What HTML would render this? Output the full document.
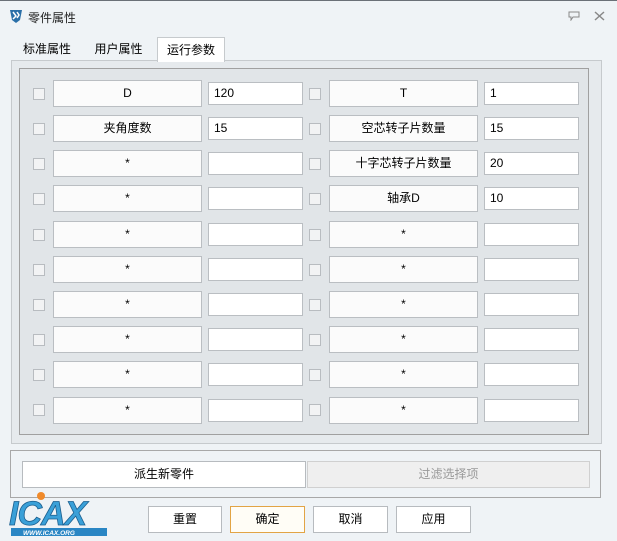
<!DOCTYPE html>
<html><head><meta charset="utf-8"><style>
*{box-sizing:border-box;margin:0;padding:0}
body{width:617px;height:541px;background:#eff3f6;font-family:"Liberation Sans","Noto Sans CJK SC",sans-serif;font-size:12px;color:#000;position:relative;overflow:hidden}
.a{position:absolute}
.top{left:0;top:0;width:617px;height:1px;background:#6a7077}
.title{left:28px;top:9px;font-size:12px;color:#222}
.tab{top:37px;height:24px;line-height:24px;text-align:center;font-size:12px}
.outer{left:11px;top:60px;width:591px;height:384px;border:1px solid #c6cacd;background:#e6eaed}
.inner{left:19px;top:68px;width:570px;height:367px;border:1px solid #a0a0a0;background:#e1e5e8}
.cb{width:12px;height:12px;border:1px solid #b8bcc0;background:#f2f3f4}
.lbl{width:149px;height:27px;border:1px solid #babec2;background:#fbfbfb;text-align:center;line-height:25px}
.val{width:95px;height:23px;border:1px solid #babec2;background:#fff;line-height:21px;padding-left:5px}
.btn{height:27px;border:1px solid #b7bbbf;background:#fff;text-align:center;line-height:25px}
</style></head><body>
<div class="a top"></div>
<svg class="a" style="left:8px;top:8px" width="16" height="16" viewBox="0 0 16 16"><path d="M2 2h12l-2 10-4 3-4-3z" fill="#2a6fa8"/><path d="M5 4l3 4-3 3M9 4l2 3-2 3" stroke="#fff" stroke-width="1.5" fill="none"/></svg>
<div class="a title">零件属性</div>
<svg class="a" style="left:568px;top:11px" width="12" height="10"><path d="M1 1h10v5H5l-2 3V6H1z" fill="none" stroke="#888"/></svg>
<svg class="a" style="left:594px;top:11px" width="11" height="10"><path d="M1 1l9 8M10 1l-9 8" stroke="#888" stroke-width="1.5"/></svg>
<div class="a tab" style="left:14px;width:66px">标准属性</div>
<div class="a tab" style="left:85px;width:67px">用户属性</div>
<div class="a outer"></div>
<div class="a tab" style="left:157px;width:68px;background:#fff;border:1px solid #c6cacd;border-bottom:none;height:25px">运行参数</div>
<div class="a inner"></div>
<!--ROWS-->
<div class="a cb" style="left:33px;top:88px"></div><div class="a lbl" style="left:53px;top:80px">D</div><div class="a val" style="left:208px;top:82px">120</div>
<div class="a cb" style="left:309px;top:88px"></div><div class="a lbl" style="left:329px;top:80px">T</div><div class="a val" style="left:484px;top:82px">1</div>
<div class="a cb" style="left:33px;top:123px"></div><div class="a lbl" style="left:53px;top:115px">夹角度数</div><div class="a val" style="left:208px;top:117px">15</div>
<div class="a cb" style="left:309px;top:123px"></div><div class="a lbl" style="left:329px;top:115px">空芯转子片数量</div><div class="a val" style="left:484px;top:117px">15</div>
<div class="a cb" style="left:33px;top:158px"></div><div class="a lbl" style="left:53px;top:150px">*</div><div class="a val" style="left:208px;top:152px"></div>
<div class="a cb" style="left:309px;top:158px"></div><div class="a lbl" style="left:329px;top:150px">十字芯转子片数量</div><div class="a val" style="left:484px;top:152px">20</div>
<div class="a cb" style="left:33px;top:193px"></div><div class="a lbl" style="left:53px;top:185px">*</div><div class="a val" style="left:208px;top:187px"></div>
<div class="a cb" style="left:309px;top:193px"></div><div class="a lbl" style="left:329px;top:185px">轴承D</div><div class="a val" style="left:484px;top:187px">10</div>
<div class="a cb" style="left:33px;top:229px"></div><div class="a lbl" style="left:53px;top:221px">*</div><div class="a val" style="left:208px;top:223px"></div>
<div class="a cb" style="left:309px;top:229px"></div><div class="a lbl" style="left:329px;top:221px">*</div><div class="a val" style="left:484px;top:223px"></div>
<div class="a cb" style="left:33px;top:264px"></div><div class="a lbl" style="left:53px;top:256px">*</div><div class="a val" style="left:208px;top:258px"></div>
<div class="a cb" style="left:309px;top:264px"></div><div class="a lbl" style="left:329px;top:256px">*</div><div class="a val" style="left:484px;top:258px"></div>
<div class="a cb" style="left:33px;top:299px"></div><div class="a lbl" style="left:53px;top:291px">*</div><div class="a val" style="left:208px;top:293px"></div>
<div class="a cb" style="left:309px;top:299px"></div><div class="a lbl" style="left:329px;top:291px">*</div><div class="a val" style="left:484px;top:293px"></div>
<div class="a cb" style="left:33px;top:334px"></div><div class="a lbl" style="left:53px;top:326px">*</div><div class="a val" style="left:208px;top:328px"></div>
<div class="a cb" style="left:309px;top:334px"></div><div class="a lbl" style="left:329px;top:326px">*</div><div class="a val" style="left:484px;top:328px"></div>
<div class="a cb" style="left:33px;top:369px"></div><div class="a lbl" style="left:53px;top:361px">*</div><div class="a val" style="left:208px;top:363px"></div>
<div class="a cb" style="left:309px;top:369px"></div><div class="a lbl" style="left:329px;top:361px">*</div><div class="a val" style="left:484px;top:363px"></div>
<div class="a cb" style="left:33px;top:404px"></div><div class="a lbl" style="left:53px;top:397px">*</div><div class="a val" style="left:208px;top:399px"></div>
<div class="a cb" style="left:309px;top:404px"></div><div class="a lbl" style="left:329px;top:397px">*</div><div class="a val" style="left:484px;top:399px"></div>

<div class="a" style="left:10px;top:450px;width:591px;height:48px;border:1px solid #a8a8a8"></div>
<div class="a btn" style="left:22px;top:461px;width:284px">派生新零件</div>
<div class="a btn" style="left:307px;top:461px;width:283px;background:#efefef;color:#999;border-color:#d0d0d0">过滤选择项</div>

<svg class="a" style="left:5px;top:490px" width="104" height="48" viewBox="0 0 104 48">
<circle cx="36" cy="6" r="4" fill="#f08a2a"/>
<text x="4" y="35" font-family="Liberation Sans,sans-serif" font-size="34" font-style="italic" font-weight="bold" fill="#3aa0d8" stroke="#1a5e8e" stroke-width="0.8" letter-spacing="-1">ICAX</text>
<rect x="6" y="38" width="96" height="8" fill="#2a86c4"/>
<text x="18" y="45" font-family="Liberation Sans,sans-serif" font-size="6.5" font-weight="bold" font-style="italic" fill="#fff">WWW.ICAX.ORG</text>
</svg>

<div class="a btn" style="left:148px;top:506px;width:74px">重置</div>
<div class="a btn" style="left:230px;top:506px;width:75px;border-color:#e2a445;background:#fffdf6">确定</div>
<div class="a btn" style="left:313px;top:506px;width:75px">取消</div>
<div class="a btn" style="left:396px;top:506px;width:75px">应用</div>
</body></html>
